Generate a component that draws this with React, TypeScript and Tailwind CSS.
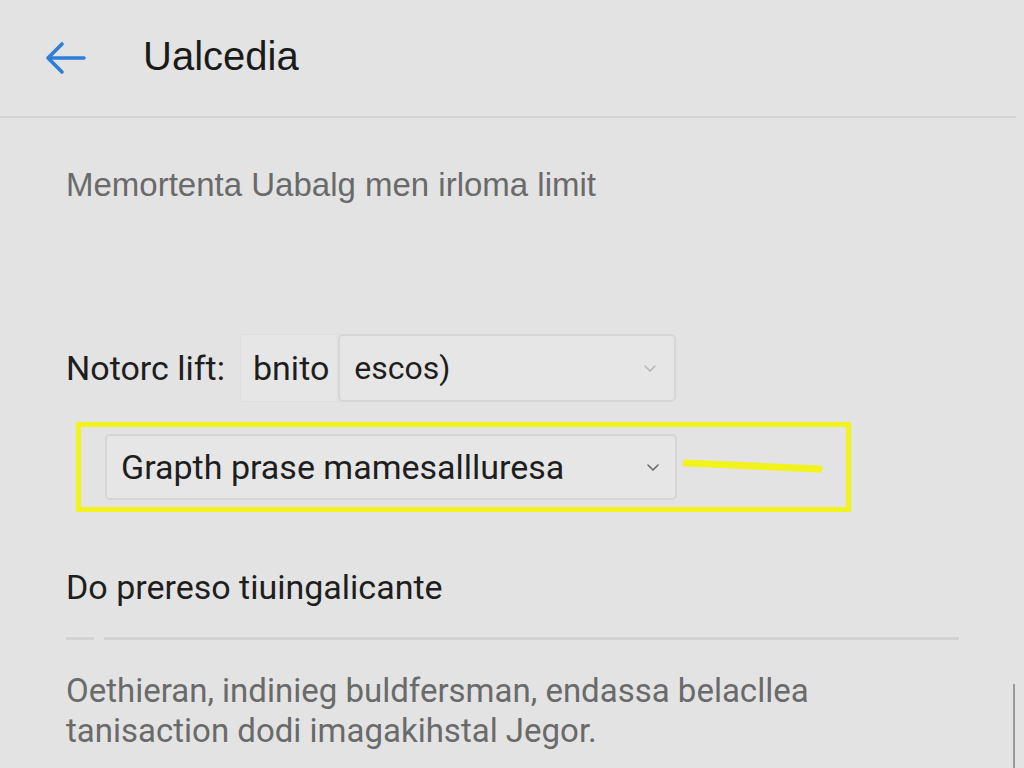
import React from "react";

function Chevron({ className }: { className?: string }) {
  return (
    <svg className={className} width="16" height="16" viewBox="0 0 16 16" fill="none">
      <path d="M3 6l5 5 5-5" stroke="currentColor" strokeWidth="1.6" strokeLinecap="round" strokeLinejoin="round" />
    </svg>
  );
}

export default function App() {
  return (
    <div className="w-[1024px] h-[768px] overflow-hidden bg-[#e3e3e3] text-[#1e1e1e] relative" style={{ fontFamily: "Roboto, 'Liberation Sans', sans-serif" }}>
      <header className="h-[118px] flex items-center border-b-2 border-[#d2d2d2] mr-[8px]">
        <div className="ml-[44px] w-[42px] flex items-center text-[#2b7fd6]">
          <svg width="42" height="36" viewBox="0 0 42 36" fill="none">
            <path d="M40 18H4M18 4L4 18l14 14" stroke="currentColor" strokeWidth="3.6" strokeLinecap="round" strokeLinejoin="round" />
          </svg>
        </div>
        <h1 className="ml-[57px] text-[40px] leading-none text-[#1a1a1a] pb-[4px]" style={{ fontFamily: "'Liberation Sans', Arial, sans-serif" }}>Ualcedia</h1>
      </header>

      <p className="ml-[66px] mt-[48px] text-[33px] leading-[38px] text-[#6a6a6a]" style={{ fontFamily: "'Liberation Sans', Arial, sans-serif" }}>
        Memortenta Uabalg men irloma limit
      </p>

      <div className="mt-[130px] ml-[66px] flex items-center h-[68px]">
        <span className="text-[34px] text-[#1e1e1e] w-[174px]">Notorc lift:</span>
        <div className="h-[68px] flex items-center pl-[12px] pr-[8px] bg-[#e6e6e6] border border-[#dedede] rounded-[4px] text-[34px]">bnito</div>
        <div className="h-[68px] flex-none w-[338px] flex items-center justify-between pl-[14px] pr-[16px] border-2 border-[#d6d6d6] rounded-[5px] bg-[#e6e6e6] text-[32px]">
          <span>escos)</span>
          <Chevron className="text-[#b8b8b8]" />
        </div>
      </div>

      <div className="mt-[20px] ml-[76px] w-[775px] h-[90px] border-[5px] border-[#f2f21c] flex items-center pl-[24px]">
        <div className="h-[66px] w-[572px] flex-none flex items-center justify-between pl-[14px] pr-[14px] border-2 border-[#d6d6d6] rounded-[5px] bg-[#e6e6e6] text-[34px]">
          <span>Grapth prase mamesallluresa</span>
          <Chevron className="text-[#6a6a6a]" />
        </div>
        <svg className="ml-[6px]" width="140" height="20" viewBox="0 0 140 20">
          <path d="M2 6 L136 12" stroke="#f2f21c" strokeWidth="7" strokeLinecap="round" />
        </svg>
      </div>

      <p className="ml-[66px] mt-[55px] text-[34px] leading-[40px] text-[#1e1e1e]">Do prereso tiuingalicante</p>

      <div className="ml-[66px] mt-[30px] flex items-center gap-[10px] w-[893px]">
        <div className="h-[3px] w-[28px] bg-[#d2d2d2]"></div>
        <div className="h-[3px] flex-1 bg-[#d2d2d2]"></div>
      </div>

      <p className="ml-[66px] mt-[31px] text-[33px] leading-[40px] text-[#6a6a6a] w-[840px]">
        Oethieran, indinieg buldfersman, endassa belacllea tanisaction dodi imagakihstal Jegor.
      </p>

      <div className="absolute right-[9px] top-[684px] bottom-0 w-[2px] bg-[#9a9a9a]"></div>
    </div>
  );
}
